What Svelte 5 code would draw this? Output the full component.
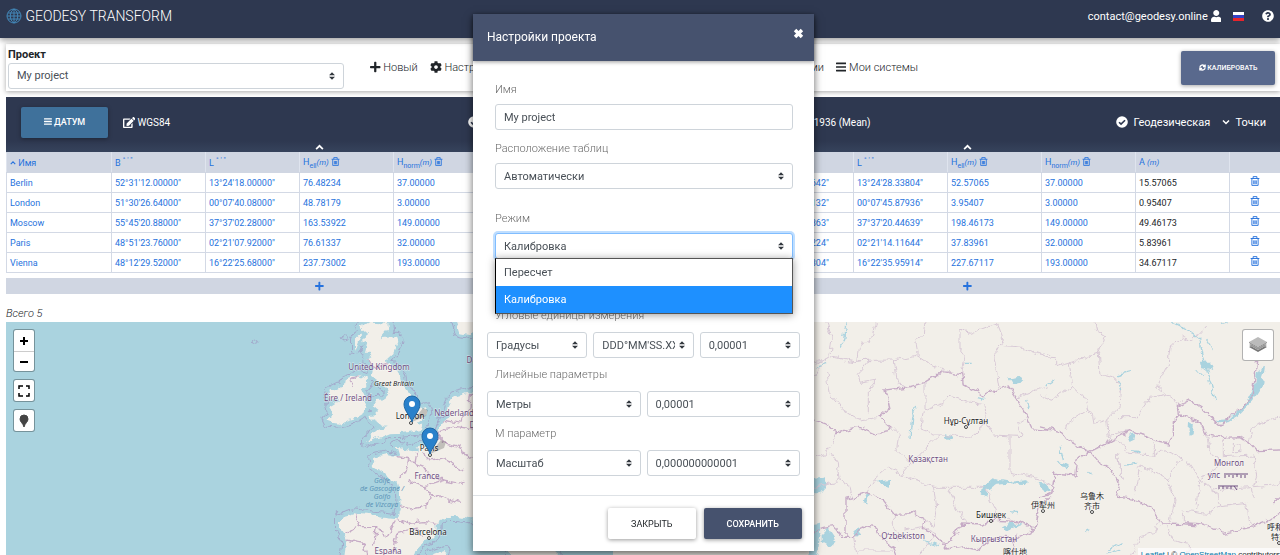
<script>
  let projectName = 'My project'
  let mode = 'calibration'
  let modeOpen = true
  let modalOpen = true

  const modes = [
    { value: 'transform', label: 'Пересчет' },
    { value: 'calibration', label: 'Калибровка' }
  ]

  const source = [
    ['Berlin', '52°31\'12.00000"', '13°24\'18.00000"', '76.48234', '37.00000', '39.48234'],
    ['London', '51°30\'26.64000"', '00°07\'40.08000"', '48.78179', '3.00000', '45.78179'],
    ['Moscow', '55°45\'20.88000"', '37°37\'02.28000"', '163.53922', '149.00000', '14.53922'],
    ['Paris', '48°51\'23.76000"', '02°21\'07.92000"', '76.61337', '32.00000', '44.61337'],
    ['Vienna', '48°12\'29.52000"', '16°22\'25.68000"', '237.73002', '193.00000', '44.73002']
  ]

  const target = [
    ['Berlin', '52°31\'16.50642"', '13°24\'28.33804"', '52.57065', '37.00000', '15.57065'],
    ['London', '51°30\'24.80132"', '00°07\'45.87936"', '3.95407', '3.00000', '0.95407'],
    ['Moscow', '55°45\'21.10863"', '37°37\'20.44639"', '198.46173', '149.00000', '49.46173'],
    ['Paris', '48°51\'24.61224"', '02°21\'14.11644"', '37.83961', '32.00000', '5.83961'],
    ['Vienna', '48°12\'31.91304"', '16°22\'35.95914"', '227.67117', '193.00000', '34.67117']
  ]

  const panels = [
    { datum: 'WGS84', rows: source },
    { datum: 'OSGB 1936 (Mean)', rows: target }
  ]

  const unitGroups = [
    { title: 'Угловые единицы измерения', items: ['Градусы', 'DDD°MM\'SS.XXX"', '0,00001'] },
    { title: 'Линейные параметры', items: ['Метры', '0,00001'] },
    { title: 'М параметр', items: ['Масштаб', '0,000000000001'] }
  ]

  // land outlines, drawn on a 3x grid
  const europe = [
    'M392 25L425 5L478 8L480 25L455 55L500 50L505 62L490 100L468 120L470 130L495 140L510 165L515 190L540 220L552 250L560 265L590 262L592 280L575 300L560 308L582 312L575 330L520 338L480 340L455 350L430 358L408 368L418 352L445 330L475 318L450 312L425 300L418 288L440 285L440 270L425 258L440 240L468 238L475 220L470 205L455 195L445 175L425 170L430 140L412 125L425 95L405 95L412 70L395 60L415 45z',
    'M345 180L385 165L410 175L412 195L395 210L405 225L410 250L400 280L375 295L330 308L295 305L290 295L310 280L298 262L325 245L300 235L295 215L325 200L340 205z',
    'M440 420L430 415L470 405L500 412L510 410L500 378L520 380L525 390L560 395L560 380L590 370L600 350L620 340L640 300L660 290L655 260L670 230L700 222L735 215L1100 215V590L720 598L690 592L650 590L620 610L620 640L600 660L560 680L545 730H340L350 660L330 630L330 590L370 580L440 588L500 595L512 560L510 520L500 490L470 470L450 450L430 438z',
    'M670 -20L690 40L720 45L735 30H800V-20z',
    'M375 55L395 40L385 65L375 90z',
    'M605 703L640 690L650 700L630 720z',
    'M840 640H980V730H840z'
  ]

  const europeBorders = [
    'M365 200L358 185L385 165M412 125L440 140L470 130',
    'M600 350L640 330L680 320L750 330M620 340L650 370L690 380L700 400L730 420M640 300L690 310L700 290L720 260L725 220',
    'M500 412L540 420L555 430L560 400M540 420L530 460L505 470M580 395L600 420L640 410L680 440L700 450M555 430L580 440L600 470L640 480L690 490L700 480M580 500L600 520L590 560L540 570L510 560M600 520L650 540L690 550M530 480L580 500L640 480',
    'M500 595L540 610L580 605L620 610M380 580L390 620L440 620L470 650L500 600M390 620L360 630L340 640M440 620L430 680M500 640L560 625L580 650M500 640L490 700M350 660L400 670L410 705'
  ]

  const westAsiaBorders = [
    'M0 300L60 320L80 338L120 325L150 322L195 342L235 335L240 318L205 292L240 265L228 210L300 200L345 187L400 155L455 165L460 195L500 215L520 228L560 210L595 198L620 235L650 290L668 330L720 335',
    'M108 655V535L170 518L220 540L250 580L310 578L345 600L340 625L380 650L400 670L430 650L455 612L520 615L545 600L620 605L675 628M600 705L620 640',
    'M0 640L40 625L70 620L100 655L130 655L160 615L200 625L220 660L250 680L260 705M400 670L410 690L460 680L500 690L560 650L620 655L675 628L690 560L720 530'
  ]

  const westAsiaRegions = [
    'M45 0L65 60L60 110L20 130M65 110L130 125L180 120L145 160L150 190L200 180L175 210L175 280M50 150L60 220L100 270L150 300L205 292M200 0L190 50L145 85L140 122L250 120L260 195L300 200M250 120L320 105L380 145L420 155M345 0L340 40L318 70L325 105',
    'M345 187L345 270L400 250L420 228L460 240L525 255L530 310L480 355L420 345L370 345L330 330L340 280M455 165L465 110L450 90L450 30L480 40L560 10M560 10L580 60L555 110L570 200M580 80L640 85L720 115M620 235L680 210L720 200M530 310L550 345L640 350L620 310L650 290M600 350L600 460L660 470L700 480L720 490M390 345L330 400L275 465L235 440L200 470L170 518M275 465L370 502H530L540 540L560 580L620 605M240 320L265 345L260 390L300 430M75 340L70 370L50 400L20 410M60 395L85 430L90 480L120 500L125 530M0 505L90 485M370 502L380 560L370 620L345 600M415 502L440 560L470 612M250 580L250 620L270 660M130 655L140 705M140 690L250 690',
    'M0 130L50 115L0 190M280 630L340 620L380 640L330 700'
  ]

  const eastAsiaBorders = [
    'M0 320L60 335L80 360L110 375L150 395L200 370L265 335L310 345L340 362L385 372L400 345L400 305L420 285L480 305L500 345L550 352L600 350L630 370L650 392L720 390',
    'M150 395L180 430L220 450L240 500L230 528L280 535L330 560L360 608L440 612L490 615L555 640L640 620L690 600L720 580',
    'M150 395L110 420L105 465L45 460L35 520L0 530M700 550L720 530',
    'M415 285L412 260L450 240L485 265L540 318L560 300L640 230L650 120'
  ]

  const eastAsiaRegions = [
    'M165 0L170 35L195 50L175 100L85 130L50 140L50 110L0 108M85 130L95 200L130 230L140 270L80 310L75 330M0 225L40 235L95 200M175 100L180 160L220 170L245 200L240 260L200 300L165 310L160 280L140 270M240 290L290 290L330 235L380 225L415 250M500 15L460 60L430 50L390 80L385 130L350 200L380 225',
    'M200 300L205 350L260 335M230 400L240 440L250 480L230 400M265 400L340 405L340 370M295 440L330 450L385 480L405 540L390 605M300 450L285 520M340 405L370 390L430 415L400 440L380 480M440 420L480 480L470 570M500 350L510 400L550 430L480 480M550 355L550 410L640 405L650 470L640 500L700 495L720 480M580 370L600 372V395H580zM430 570L500 580L540 560L620 550L630 615M430 570V608M520 510L630 500L640 540M630 370L640 320L720 290M360 608L340 640L300 650L275 705M380 608L400 660L445 670V705M200 350L250 370L265 400M480 480L530 520L540 560'
  ]

  const labels = [
    { text: 'United Kingdom', x: 379, y: 370, kind: 'country' },
    { text: 'Great Britain', x: 394, y: 386, kind: 'island' },
    { text: 'Éire / Ireland', x: 348, y: 401, kind: 'country' },
    { text: 'Nederland', x: 454, y: 416, kind: 'country' },
    { text: 'Danmark', x: 484, y: 363, kind: 'country' },
    { text: 'Deutschland', x: 493, y: 428, kind: 'country' },
    { text: 'France', x: 427, y: 479, kind: 'country' },
    { text: 'España', x: 388, y: 554, kind: 'country' },
    { text: 'Golfe', x: 382, y: 483, kind: 'water' },
    { text: 'de Gascogne /', x: 382, y: 491, kind: 'water' },
    { text: 'Golfo', x: 382, y: 499, kind: 'water' },
    { text: 'de Vizcaya', x: 382, y: 507, kind: 'water' },
    { text: 'London', x: 410, y: 419, kind: 'city' },
    { text: 'Paris', x: 429, y: 451, kind: 'city' },
    { text: 'Barcelona', x: 428, y: 535, kind: 'city' },
    { text: 'Нұр-Сұлтан', x: 966, y: 424, kind: 'city' },
    { text: 'Қазақстан', x: 928, y: 462, kind: 'country' },
    { text: 'Бишкек', x: 991, y: 518, kind: 'city' },
    { text: 'Oʻzbekiston', x: 903, y: 539, kind: 'country' },
    { text: 'Кыргызстан', x: 994, y: 542, kind: 'country' },
    { text: '喀什地', x: 1015, y: 555, kind: 'city' },
    { text: '伊犁州', x: 1043, y: 508, kind: 'city' },
    { text: '乌鲁木', x: 1092, y: 499, kind: 'city' },
    { text: '齐市', x: 1092, y: 509, kind: 'city' },
    { text: 'Монгол', x: 1229, y: 466, kind: 'country' },
    { text: 'улс', x: 1214, y: 478, kind: 'country' },
    { text: '呼和浩', x: 1279, y: 530, kind: 'city' },
    { text: '特市', x: 1279, y: 540, kind: 'city' }
  ]

  const places = [[411, 423], [430, 455], [429, 538], [966, 427], [991, 521], [1043, 511], [1092, 512], [1279, 543]]
  const pins = [[412, 422], [430, 454]]

  function pickMode(value) {
    mode = value
    modeOpen = false
  }
</script>

{#snippet icon(name)}
  {#if name == 'plus'}
    <svg class="icon" viewBox="0 0 448 512"><path d="M416 208H272V64c0-17.670-14.330-32-32-32h-32c-17.670 0-32 14.330-32 32v144H32c-17.670 0-32 14.330-32 32v32c0 17.670 14.330 32 32 32h144v144c0 17.670 14.330 32 32 32h32c17.670 0 32-14.330 32-32V304h144c17.670 0 32-14.330 32-32v-32c0-17.670-14.330-32-32-32z" /></svg>
  {:else if name == 'cog'}
    <svg class="icon" viewBox="0 0 512 512"><path d="M487.400 315.700l-42.600-24.600c4.300-23.200 4.300-47 0-70.200l42.600-24.600c4.900-2.800 7.100-8.600 5.500-14-11.100-35.600-30-67.800-54.700-94.600-3.800-4.100-10-5.100-14.800-2.300L380.800 110c-17.900-15.400-38.500-27.300-60.800-35.100V25.800c0-5.600-3.900-10.500-9.400-11.700-36.700-8.200-74.300-7.800-109.200 0-5.500 1.200-9.400 6.100-9.400 11.700V75c-22.200 7.900-42.800 19.800-60.800 35.100L88.700 85.500c-4.900-2.800-11-1.900-14.800 2.300-24.700 26.700-43.600 58.900-54.700 94.600-1.700 5.400.6 11.200 5.500 14L67.300 221c-4.300 23.200-4.300 47 0 70.200l-42.600 24.600c-4.900 2.800-7.100 8.600-5.500 14 11.100 35.600 30 67.800 54.700 94.600 3.800 4.100 10 5.100 14.800 2.300l42.600-24.600c17.900 15.400 38.500 27.300 60.800 35.100v49.200c0 5.600 3.900 10.500 9.400 11.700 36.700 8.200 74.300 7.800 109.200 0 5.500-1.200 9.400-6.100 9.400-11.700v-49.200c22.200-7.900 42.800-19.800 60.800-35.100l42.600 24.600c4.900 2.800 11 1.900 14.800-2.300 24.700-26.700 43.600-58.900 54.700-94.600 1.500-5.500-.7-11.300-5.600-14.100zM256 336c-44.100 0-80-35.900-80-80s35.900-80 80-80 80 35.900 80 80-35.900 80-80 80z" /></svg>
  {:else if name == 'bars'}
    <svg class="icon" viewBox="0 0 448 512"><path d="M16 68h416q16 0 16 16v40q0 16-16 16H16q-16 0-16-16V84q0-16 16-16zM16 220h416q16 0 16 16v40q0 16-16 16H16q-16 0-16-16v-40q0-16 16-16zM16 372h416q16 0 16 16v40q0 16-16 16H16q-16 0-16-16v-40q0-16 16-16z" /></svg>
  {:else if name == 'edit'}
    <svg class="icon" viewBox="0 0 576 512"><path d="M402.600 83.200l90.200 90.200c3.800 3.800 3.800 10 0 13.800L274.400 405.600l-92.800 10.300c-12.400 1.400-22.900-9.100-21.500-21.500l10.300-92.800L388.800 83.200c3.800-3.800 10-3.800 13.800 0zm162-22.900l-48.800-48.800c-15.200-15.200-39.900-15.200-55.200 0l-35.400 35.400c-3.800 3.800-3.800 10 0 13.800l90.200 90.200c3.800 3.800 10 3.800 13.800 0l35.400-35.400c15.200-15.300 15.200-40 0-55.200zM384 346.200V448H64V128h229.800c3.200 0 6.200-1.300 8.500-3.500l40-40c7.600-7.600 2.200-20.500-8.500-20.500H48C21.500 64 0 85.500 0 112v352c0 26.500 21.500 48 48 48h352c26.500 0 48-21.500 48-48V306.200c0-10.700-12.900-16-20.500-8.500l-40 40c-2.200 2.300-3.500 5.300-3.500 8.500z" /></svg>
  {:else if name == 'user'}
    <svg class="icon" viewBox="0 0 448 512"><path d="M224 256c70.700 0 128-57.300 128-128S294.700 0 224 0 96 57.300 96 128s57.300 128 128 128zm89.600 32h-16.700c-22.200 10.200-46.900 16-72.900 16s-50.600-5.800-72.900-16h-16.700C60.200 288 0 348.200 0 422.400V464c0 26.500 21.500 48 48 48h352c26.500 0 48-21.500 48-48v-41.600c0-74.200-60.200-134.400-134.400-134.400z" /></svg>
  {:else if name == 'help'}
    <svg class="icon" viewBox="0 0 512 512"><path fill-rule="evenodd" d="M504 256c0 137-111 248-248 248S8 393 8 256C8 119 119 8 256 8s248 111 248 248zM262.700 90c-54.500 0-89.300 23-116.600 63.800-3.500 5.300-2.400 12.400 2.700 16.200l34.700 26.300c5.200 4 12.600 3 16.700-2.100 17.800-22.700 30.100-35.800 57.300-35.800 20.400 0 45.700 13.100 45.700 33 0 15-12.400 22.600-32.600 33.900C247.100 238.500 216 255 216 296v4c0 6.600 5.400 12 12 12h56c6.600 0 12-5.400 12-12v-1.300c0-28.500 83.200-29.700 83.200-106.700 0-58-60.200-102-116.500-102zM256 338c-25.400 0-46 20.600-46 46s20.600 46 46 46 46-20.600 46-46-20.600-46-46-46z" /></svg>
  {:else if name == 'check'}
    <svg class="icon" viewBox="0 0 512 512"><circle cx="256" cy="256" r="248" /><path class="knockout" d="M130 265l85 85 170-170" /></svg>
  {:else if name == 'down'}
    <svg class="icon line" viewBox="0 0 16 16"><path d="M2 5l6 6 6-6" /></svg>
  {:else if name == 'up'}
    <svg class="icon line" viewBox="0 0 16 16"><path d="M2 11l6-6 6 6" /></svg>
  {:else if name == 'times'}
    <svg class="icon cross" viewBox="0 0 16 16"><path d="M3 3l10 10M13 3L3 13" /></svg>
  {:else if name == 'sync'}
    <svg class="icon line" viewBox="0 0 16 16"><path d="M2 8a6 6 0 0 1 11-3M14 1v5H9M14 8a6 6 0 0 1-11 3M2 15v-5h5" /></svg>
  {:else if name == 'trash'}
    <svg class="icon bin" viewBox="0 0 16 16"><path d="M1 4h14M5 4V1h6v3M3 4v11h10V4M6 7v6M8 7v6M10 7v6" /></svg>
  {:else if name == 'globe'}
    <svg class="icon thin" viewBox="0 0 16 16"><path d="M8 1a7 7 0 1 0 0 14A7 7 0 1 0 8 1zM8 1v14M1 8h14M8 1C3 4 3 12 8 15M8 1c5 3 5 11 0 14M2 5h12M2 11h12" /></svg>
  {/if}
{/snippet}

<div class="page">
  <header class="topbar">
    <a class="brand" href="#home">{@render icon('globe')} GEODESY TRANSFORM</a>
    <nav class="account">
      <a href="#account">contact@geodesy.online {@render icon('user')}</a>
      <a href="#lang" aria-label="Русский">
        <svg class="flag" viewBox="0 0 11 9"><path fill="#fff" d="M0 0h11v3H0z" /><path fill="#3340c4" d="M0 3h11v3H0z" /><path fill="#e8242c" d="M0 6h11v3H0z" /></svg>
      </a>
      <a href="#help" aria-label="Помощь">{@render icon('help')}</a>
    </nav>
  </header>

  <main>
    <section class="project">
      <div class="project-field">
        <label for="project">Проект</label>
        <select id="project"><option>My project</option></select>
      </div>
      <nav class="menu">
        <a href="#new">{@render icon('plus')} Новый</a>
        <a href="#settings">{@render icon('cog')} Настройки</a>
        <a class="push" href="#share">{@render icon('cog')} Обмен системами</a>
        <a href="#systems">{@render icon('bars')} Мои системы</a>
      </nav>
      <button class="calibrate">{@render icon('sync')} КАЛИБРОВАТЬ</button>
    </section>

    <div class="panels">
      {#each panels as panel, i}
        <section class="panel">
          <div class="panel-head">
            <div class="panel-tools">
              <button class="datum">{@render icon('bars')} ДАТУМ</button>
              <a class="datum-name" href="#datum">{@render icon('edit')}{panel.datum}</a>
              <a class="push" href="#geodetic">{@render icon('check')}&nbsp; Геодезическая</a>
              <a href="#points">{@render icon('down')}&nbsp; Точки</a>
            </div>
            <button class="collapse" aria-label="Свернуть">{@render icon('up')}</button>
          </div>
          <table>
            <thead>
              <tr>
                <th class="name">{@render icon('up')} Имя</th>
                <th>B <sup>° ' "</sup></th>
                <th>L <sup>° ' "</sup></th>
                <th>H<sub>ell</sub><i>(m)</i> {@render icon('trash')}</th>
                <th>H<sub>norm</sub><i>(m)</i> {@render icon('trash')}</th>
                <th>A <i>(m)</i></th>
                <th class="remove"></th>
              </tr>
            </thead>
            <tbody>
              {#each panel.rows as row}
                <tr>
                  {#each row as cell, c}
                    <td class:computed={c == 5}>{cell}</td>
                  {/each}
                  <td class="remove"><button aria-label="Удалить {row[0]}">{@render icon('trash')}</button></td>
                </tr>
              {/each}
            </tbody>
          </table>
          <button class="add" aria-label="Добавить точку">{@render icon('plus')}</button>
          {#if i == 0}
            <p class="total">Всего 5</p>
          {/if}
        </section>
      {/each}
    </div>

    <section class="map">
      <svg class="tiles" viewBox="6 322 1274 243" preserveAspectRatio="xMidYMin slice">
        <defs>
          <filter id="rough" x="-20%" y="-20%" width="140%" height="140%" color-interpolation-filters="sRGB">
            <feTurbulence type="fractalNoise" baseFrequency="0.04" numOctaves="3" seed="4" />
            <feDisplacementMap in="SourceGraphic" scale="24" xChannelSelector="R" yChannelSelector="G" />
          </filter>
        </defs>
        <rect class="sea" x="6" y="322" width="1274" height="243" />
        <g transform="translate(230 320) scale(.3333)" filter="url(#rough)">
          {#each europe as d}<path class="waters" {d} />{/each}
          {#each europe as d}<path class="shelf" {d} />{/each}
          {#each europe as d}<path class="land" {d} />{/each}
          {#each europeBorders as d}<path class="border" {d} />{/each}
          <circle class="islet" cx="75" cy="62" r="8" />
          <circle class="islet" cx="345" cy="52" r="11" />
          <circle class="islet" cx="490" cy="398" r="8" />
        </g>
        <rect class="land" x="613" y="322" width="667" height="243" />
        <g transform="translate(810 320) scale(.3333)" filter="url(#rough)">
          <path class="lake" d="M0 475L40 470L50 495L30 520H0zM0 610L30 605L30 650L20 720H-5zM35 640L55 620L75 650L80 665L60 680L35 665zM515 520L520 495L545 475L600 485L650 480L645 492L600 490L555 495L535 510L530 530zM680 485L710 490L720 515L690 505zM575 620L600 605L635 615L600 630zM130 630L150 625L155 640L140 650zM160 555L170 520L180 520L168 555zM195 485L240 480L240 500L205 495zM595 175L630 170L640 185L605 190zM405 340L430 345L425 360L405 355z" />
          {#each westAsiaRegions as d}<path class="region" {d} />{/each}
          {#each westAsiaBorders as d}<path class="border" {d} />{/each}
          <path class="river" d="M110 0L100 60L90 80M20 140L50 130M320 255L305 290L300 360M500 230L520 235M465 130H485M650 240L660 265M600 575L625 578M340 660L390 680" />
        </g>
        <g transform="translate(1040 320) scale(.3333)" filter="url(#rough)">
          <path class="lake" d="M530 300L570 298L620 245L645 200L655 150L675 140L665 200L640 240L590 290L560 308L530 306zM450 310L462 305L458 340L448 345zM262 345L280 340L285 355L270 362zM50 425L85 435L88 445L60 438zM0 485L20 490L30 515L0 500zM480 125L510 125L520 150L500 145L482 140zM275 390L300 392L295 402z" />
          {#each eastAsiaRegions as d}<path class="region" {d} />{/each}
          {#each eastAsiaBorders as d}<path class="border" {d} />{/each}
          <path class="river" d="M400 10L440 30L480 60L495 130L510 180L525 240M230 165L270 155M235 180L245 210M20 195L45 180M465 155L490 160M255 435L290 430M145 460L155 465M135 630L150 635M200 690L245 665M200 700L240 685M60 380L70 420M540 10L560 5M500 60L520 90" />
        </g>
        <path class="script" d="M1224 474h24M1225 475v3M1229 475v2M1233 475v3M1237 474v3M1241 475v3M1245 475v3M1218 486h20M1219 487v2M1223 486v3M1227 487v2M1231 486v3M1234 486l3 4" />
        {#each places as [x, y]}
          <circle class="place" cx={x} cy={y} r="1.5" />
        {/each}
        {#each labels as label}
          <text class={label.kind} x={label.x} y={label.y}>{label.text}</text>
        {/each}
        {#each pins as [x, y]}
          <g transform="translate({x} {y})">
            <path class="pin-shadow" d="M0 0L11 -14L16 -12L14 -6z" />
            <path class="pin" d="M0 0C-2 -7 -8 -11 -8 -18A8 8 0 0 1 8 -18C8 -11 2 -7 0 0z" />
            <circle cx="0" cy="-18" r="3" fill="#fff" />
          </g>
        {/each}
      </svg>
      <div class="controls">
        <div class="zoom">
          <button aria-label="Приблизить"><svg viewBox="0 0 20 20"><path d="M10 6v8M6 10h8" /></svg></button>
          <button aria-label="Отдалить"><svg viewBox="0 0 20 20"><path d="M6 10h8" /></svg></button>
        </div>
        <div class="zoom">
          <button aria-label="На весь экран"><svg class="fine" viewBox="0 0 20 20"><path d="M5 8V5h4M12 5h3v3M15 12v3h-3M9 15H5v-3" /></svg></button>
        </div>
        <div class="zoom">
          <button aria-label="Маркер"><svg viewBox="0 0 20 20"><path class="drop" d="M10 16C9 12 6 11 6 8a4 4 0 0 1 8 0C14 11 11 12 10 16z" /></svg></button>
        </div>
      </div>
      <button class="layers" aria-label="Слои">
        <svg viewBox="0 0 20 20"><path fill="#777" d="M1 12l9 5 9-5-2-1-7 4-7-4z" /><path fill="#999" d="M1 10l9 5 9-5-2-1-7 4-7-4z" /><path fill="#bbb" d="M1 7l9-5 9 5-9 5z" /><path fill="#888" d="M1 7l9 5 9-5v1l-9 5-9-5z" /></svg>
      </button>
      <div class="credits"><a href="#leaflet">Leaflet</a> | © <a href="#osm">OpenStreetMap</a> contributors</div>
    </section>
  </main>

  {#if modalOpen}
    <div class="overlay">
      <div class="modal" role="dialog" aria-labelledby="modal-title">
        <div class="modal-head">
          <h2 id="modal-title">Настройки проекта</h2>
          <button class="close" aria-label="Закрыть окно" on:click={() => modalOpen = false}>{@render icon('times')}</button>
        </div>
        <form class="modal-body">
          <div class="field">
            <label for="name">Имя</label>
            <input id="name" type="text" bind:value={projectName} />
          </div>
          <div class="field">
            <label for="placement">Расположение таблиц</label>
            <select id="placement"><option>Автоматически</option></select>
          </div>
          <div class="field mode">
            <label for="mode">Режим</label>
            <select id="mode" class:open={modeOpen} bind:value={mode}>
              {#each modes as m}
                <option value={m.value}>{m.label}</option>
              {/each}
            </select>
            {#if modeOpen}
              <div class="options" role="listbox" aria-label="Режим">
                {#each modes as m}
                  <button type="button" role="option" aria-selected={m.value == mode} class:selected={m.value == mode} on:click={() => pickMode(m.value)}>{m.label}</button>
                {/each}
              </div>
            {/if}
          </div>
          {#each unitGroups as group, g}
            <div class="units">
              <label for="unit-{g}-0">{group.title}</label>
              <div class="unit-row">
                {#each group.items as item, n}
                  <select id="unit-{g}-{n}" aria-label={n ? group.title : null}><option>{item}</option></select>
                {/each}
              </div>
            </div>
          {/each}
        </form>
        <div class="modal-foot">
          <button on:click={() => modalOpen = false}>ЗАКРЫТЬ</button>
          <button class="primary">СОХРАНИТЬ</button>
        </div>
      </div>
    </div>
  {/if}
</div>

<style>
  :global(body) {
    background: #fff;
  }

  .page {
    height: 100vh;
    overflow: hidden;
    font-family: Roboto, sans-serif;
    font-size: 11px;
    font-weight: 300;
    color: #212529;
  }

  .page * {
    box-sizing: border-box;
  }

  a {
    color: inherit;
    text-decoration: none;
    white-space: nowrap;
  }

  button {
    padding: 0;
    border: 0;
    background: none;
    color: inherit;
    font: inherit;
    cursor: pointer;
  }

  .icon {
    height: 12px;
    width: auto;
    fill: currentColor;
    vertical-align: -2px;
  }

  .line, .thin, .cross, .bin {
    fill: none;
    stroke: currentColor;
    stroke-width: 3;
  }

  .thin {
    stroke-width: 1;
  }

  .bin {
    stroke-width: 1.5;
  }

  .cross {
    stroke-width: 5;
  }

  .knockout {
    fill: none;
    stroke: #2e3850;
    stroke-width: 70;
  }

  .topbar {
    position: relative;
    display: flex;
    align-items: center;
    justify-content: space-between;
    height: 38px;
    padding: 0 6px 6px;
    background: #2e3850;
    color: #fff;
    box-shadow: 0 2px 6px rgba(0, 0, 0, 0.4);
  }

  .brand {
    font-size: 14px;
  }

  .brand .icon {
    height: 16px;
    color: #4287b8;
    vertical-align: -3px;
  }

  .account {
    display: flex;
    align-items: center;
    gap: 12px;
    font-weight: 400;
  }

  .account a:last-child {
    margin-left: 6px;
  }

  .flag {
    display: block;
    width: 11px;
    height: 9px;
  }

  main {
    padding: 6px 0 0 6px;
  }

  .project {
    display: flex;
    align-items: center;
    height: 47px;
    padding: 0 5px 0 2px;
    background: #fff;
    box-shadow: 0 1px 5px rgba(0, 0, 0, 0.35);
  }

  .project-field {
    width: 336px;
    margin-right: 26px;
  }

  .project-field label {
    display: block;
    font-size: 11px;
    line-height: 16px;
    font-weight: 700;
  }

  select, input {
    display: block;
    width: 100%;
    height: 26px;
    padding: 0 8px;
    border: 1px solid #ced4da;
    border-radius: 3px;
    background-color: #fff;
    color: #495057;
    font: inherit;
    font-weight: 400;
    outline: none;
  }

  select {
    appearance: none;
    padding-right: 18px;
    background-image: url("data:image/svg+xml,%3Csvg xmlns='http://www.w3.org/2000/svg' viewBox='0 0 4 5'%3E%3Cpath fill='%23343a40' d='M2 0L0 2h4zm0 5L0 3h4z'/%3E%3C/svg%3E");
    background-repeat: no-repeat;
    background-position: right 8px center;
    background-size: 6px 8px;
  }

  .menu {
    display: flex;
    align-items: center;
    gap: 12px;
    width: 548px;
  }

  .push {
    margin-left: auto;
  }

  .calibrate {
    width: 94px;
    height: 34px;
    margin-left: auto;
    border-radius: 2px;
    background: #59698d;
    color: #fff;
    font-size: 7px;
    font-weight: 500;
    box-shadow: 0 1px 4px rgba(0, 0, 0, 0.35);
  }

  .calibrate .icon {
    height: 7px;
    vertical-align: -1px;
  }

  .panels {
    display: grid;
    grid-template-columns: 1fr 1fr;
    column-gap: 21px;
    height: 231px;
    padding-top: 6px;
  }

  .panel-head {
    height: 55px;
    background: linear-gradient(#2e3850 80%, #36435c);
    color: #fff;
    font-weight: 400;
  }

  .panel-tools {
    display: flex;
    align-items: center;
    gap: 12px;
    height: 46px;
    padding: 4px 15px 0;
  }

  .datum {
    width: 87px;
    height: 31px;
    margin-right: 3px;
    border-radius: 2px;
    background: #3f719b;
    font-size: 9px;
    font-weight: 500;
    box-shadow: 0 1px 4px rgba(0, 0, 0, 0.35);
  }

  .datum .icon {
    height: 9px;
    vertical-align: -1px;
  }

  .datum-name {
    font-size: 10px;
  }

  .datum-name .icon {
    height: 11px;
    margin-right: 2px;
  }

  .panel-tools .line {
    height: 8px;
    vertical-align: 0;
  }

  .collapse {
    display: block;
    width: 100%;
    height: 9px;
  }

  .collapse .icon {
    display: block;
    height: 9px;
    margin: 0 auto;
  }

  table {
    width: 100%;
    table-layout: fixed;
    border-collapse: collapse;
    font-size: 9px;
    color: #2672dd;
  }

  th, td {
    height: 20px;
    padding: 0 3px;
    border: 1px solid #d3d9e5;
    font-weight: 400;
    line-height: 12px;
    text-align: left;
    white-space: nowrap;
  }

  th {
    width: 94px;
    border-color: #d0d6e2 #dfe4ee;
    background: #d0d6e2;
  }

  th .icon {
    height: 9px;
    vertical-align: -1px;
  }

  th .line {
    height: 6px;
    vertical-align: 0;
  }

  th i {
    font-size: 8px;
  }

  sup, sub {
    font-size: 7px;
    line-height: 0;
  }

  .name {
    width: 105px;
  }

  .remove {
    width: 51px;
    text-align: center;
  }

  .remove .icon {
    display: block;
    height: 10px;
  }

  .computed {
    color: #212529;
  }

  .add {
    display: block;
    width: 100%;
    height: 16px;
    margin-top: 5px;
    background: #d0d6e2;
    color: #2672dd;
  }

  .add .icon {
    display: block;
    height: 10px;
    margin: 0 auto;
  }

  .total {
    margin: 13px 0 0;
    font-size: 11px;
    line-height: 14px;
    font-style: italic;
  }

  .map {
    position: relative;
    height: 243px;
  }

  .tiles {
    display: block;
    width: 100%;
    height: 100%;
  }

  .sea {
    fill: #aad3df;
  }

  .land {
    fill: #f2efe9;
  }

  .waters {
    fill: none;
    stroke: #a3a9cb;
    stroke-width: 30;
    stroke-linejoin: round;
  }

  .shelf {
    fill: none;
    stroke: #aad3df;
    stroke-width: 24;
    stroke-linejoin: round;
  }

  .border, .region, .islet, .river {
    fill: none;
    stroke: #c6abc6;
    stroke-width: 4;
  }

  .region {
    stroke: #d8c9d6;
    stroke-width: 3;
  }

  .islet {
    stroke: #a3a9cb;
    stroke-width: 3;
  }

  .river {
    stroke: #aad3df;
  }

  .lake {
    fill: #aad3df;
  }

  text {
    font-family: "Noto Sans", "Noto Sans CJK SC", sans-serif;
    font-size: 8px;
    font-weight: 400;
    text-anchor: middle;
    paint-order: stroke;
    stroke: rgba(255, 255, 255, 0.6);
    stroke-width: 1px;
  }

  .country {
    fill: #6d4d80;
  }

  .city {
    fill: #222;
  }

  .island {
    fill: #222;
    font-size: 7px;
    font-style: italic;
  }

  .water {
    fill: #5b93b8;
    font-size: 7px;
    font-style: italic;
    stroke: none;
  }

  .script {
    fill: none;
    stroke: #6d4d80;
    stroke-width: 1;
  }

  .place {
    fill: #fff;
    stroke: #444;
    stroke-width: 1;
  }

  .pin {
    fill: #2a81cb;
    stroke: #2068a5;
    stroke-width: 1;
  }

  .pin-shadow {
    fill: rgba(0, 0, 0, 0.2);
  }

  .controls {
    position: absolute;
    top: 7px;
    left: 7px;
    display: grid;
    gap: 7px;
  }

  .zoom {
    border: 1px solid rgba(0, 0, 0, 0.3);
    border-radius: 3px;
    background: #fff;
    background-clip: padding-box;
  }

  .zoom button {
    display: block;
    height: 21px;
  }

  .zoom button + button {
    height: 20px;
    border-top: 1px solid #ccc;
  }

  .zoom svg {
    display: block;
    width: 20px;
    height: 20px;
    fill: none;
    stroke: #000;
    stroke-width: 2;
  }

  .zoom .fine {
    stroke-width: 1.5;
  }

  .zoom .drop {
    fill: #444;
    stroke: #444;
    stroke-width: 1;
  }

  .layers {
    position: absolute;
    top: 7px;
    right: 6px;
    display: grid;
    place-items: center;
    width: 32px;
    height: 32px;
    border: 1px solid rgba(0, 0, 0, 0.3);
    border-radius: 3px;
    background: #fff;
  }

  .layers svg {
    width: 20px;
    height: 20px;
  }

  .credits {
    position: absolute;
    right: 0;
    bottom: 0;
    padding: 0 0 3px 3px;
    background: rgba(255, 255, 255, 0.7);
    font-family: "Liberation Sans", Arial, sans-serif;
    font-size: 8px;
    line-height: 14px;
    font-weight: 400;
  }

  .credits a {
    color: #0078a8;
  }

  .overlay {
    position: fixed;
    inset: 0;
    display: flex;
    align-items: flex-start;
    justify-content: center;
    padding: 14px 0 0 7px;
  }

  .modal {
    width: 341px;
    background: #fff;
    box-shadow: 0 3px 8px rgba(0, 0, 0, 0.6);
  }

  .modal-head {
    display: flex;
    align-items: flex-start;
    justify-content: space-between;
    height: 47px;
    padding: 14px 10px 0 14px;
    background: #46526e;
    color: #fff;
    box-shadow: 0 1px 4px rgba(0, 0, 0, 0.4);
  }

  h2 {
    margin: 0;
    font-size: 12px;
    line-height: 18px;
    font-weight: 400;
  }

  .close {
    line-height: 12px;
  }

  .close .icon {
    display: block;
    height: 11px;
  }

  .modal-body {
    padding: 20px 14px 11px;
  }

  .modal-body label {
    display: block;
    padding-left: 8px;
    line-height: 18px;
    color: #6a6a6a;
  }

  .field {
    margin: 0 7px 10px 8px;
  }

  .modal-body .field label {
    padding-left: 0;
    margin-bottom: 5px;
  }

  .modal-body .mode {
    position: relative;
    margin-top: 21px;
    margin-bottom: 48px;
  }

  .open {
    border-color: #80bdff;
    box-shadow: 0 0 0 2px #bfdeff;
  }

  .options {
    position: absolute;
    top: 48px;
    left: 0;
    right: 0;
    border: 1px solid #555;
    border-left-color: #000;
    background: #fff;
    box-shadow: 0 1px 8px rgba(0, 0, 0, 0.4);
  }

  .options button {
    display: block;
    width: 100%;
    height: 27px;
    padding: 0 8px;
    color: #495057;
    font-weight: 400;
    text-align: left;
  }

  .options .selected {
    background: #1e90ff;
    color: #fff;
  }

  .units {
    margin-bottom: 8px;
  }

  .unit-row {
    display: flex;
    gap: 6px;
    margin-top: 7px;
  }

  .unit-row select {
    flex: 1;
    min-width: 0;
  }

  .modal-foot {
    display: flex;
    justify-content: flex-end;
    gap: 8px;
    padding: 12px;
    border-top: 1px solid #dee2e6;
  }

  .modal-foot button {
    height: 31px;
    padding: 0 23px;
    border-radius: 2px;
    font-size: 9px;
    font-weight: 400;
    box-shadow: 0 1px 4px rgba(0, 0, 0, 0.4);
  }

  .modal-foot .primary {
    background: #46526e;
    color: #fff;
    font-weight: 500;
  }
</style>
